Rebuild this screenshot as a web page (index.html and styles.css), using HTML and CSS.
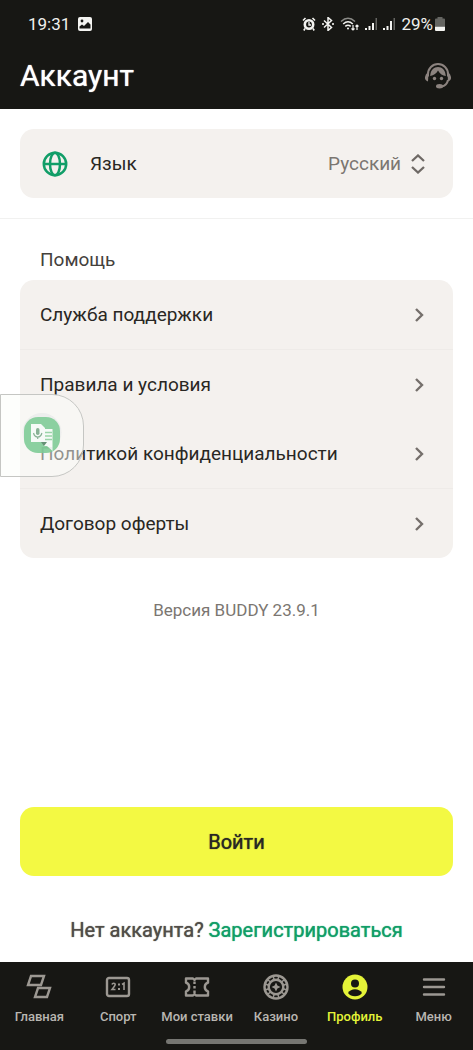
FILE: index.html
```html
<!DOCTYPE html>
<html lang="ru">
<head>
<meta charset="utf-8">
<meta name="viewport" content="width=device-width, initial-scale=1">
<title>Аккаунт</title>
<link rel="stylesheet" href="styles.css">
</head>
<body>
<div class="app">
  <header class="top">
    <div class="status">
      <div class="status-left">
        <span>19:31</span>
        <svg width="14" height="14" viewBox="0 0 14 14"><rect width="14" height="14" rx="2" fill="#f4f4f1"/><circle cx="4" cy="4" r="1.4" fill="#171714"/><path d="M1.5 11.5V9.5L4 7.5l2 1.5 4-4 2.5 2.500v4z" fill="#171714"/></svg>
      </div>
      <div class="status-right">
        <svg width="14" height="14" viewBox="0 0 14 14" fill="none" stroke="#f4f4f1"><circle cx="7" cy="7.500" r="4.200" stroke-width="2.600"/><path d="M7 5v3h2" stroke-width="1.300"/><path d="M1 3.500L3.500 1M10.500 1L13 3.500M3 11.500l-1.200 2M11 11.500l1.200 2" stroke-width="1.600"/></svg>
        <svg width="14" height="14" viewBox="0 0 14 14" fill="none" stroke="#f4f4f1" stroke-width="1.500"><path d="M3 3.500l7.500 7L7 13.500V.5l3.500 3-7.500 7"/><path d="M1.200 7h1.600M11.200 7h1.600" stroke-width="1.800"/></svg>
        <svg width="20" height="14" viewBox="0 0 20 14" fill="none" stroke="#f4f4f1" stroke-width="1.500"><path d="M1 4.500Q8-2 15 4.500" stroke="#8b8b87"/><path d="M3.200 7Q8 2.500 12.800 7M5.300 9.400Q8 7 10.700 9.400"/><circle cx="8" cy="11.500" r="1" fill="#f4f4f1" stroke="none"/><path d="M13 8v5M11.500 11.500L13 13l1.500-1.500M17 13V8M15.500 9.500L17 8l1.500 1.500" stroke-width="1.200"/></svg>
        <svg width="13" height="14" viewBox="0 0 13 14"><path d="M0 11h2v2H0zM3.500 9h2v4h-2zM7 6h2v7H7z" fill="#f4f4f1"/><path d="M10.500 1h1.500v12h-1.500z" fill="#656561"/></svg>
        <svg width="13" height="14" viewBox="0 0 13 14"><path d="M0 11h2v2H0zM3.500 9h2v4h-2zM7 4h2v9H7z" fill="#f4f4f1"/><path d="M10.500 1h1.500v12h-1.500z" fill="#656561"/></svg>
        <span class="battery">29%<svg width="10" height="14" viewBox="0 0 10 14"><path d="M2.500 0h5v1.500H9A1 1 0 0 1 10 2.500V9H0V2.500A1 1 0 0 1 1 1.500h1.500z" fill="#656561"/><path d="M0 9.500h10V13a1 1 0 0 1-1 1H1a1 1 0 0 1-1-1z" fill="#f4f4f1"/></svg></span>
      </div>
    </div>
    <div class="title-bar">
      <h1 class="title">Аккаунт</h1>
      <button class="support" type="button" aria-label="Поддержка">
        <svg width="28" height="28" viewBox="0 0 28 28" fill="none" stroke="#8c837f" stroke-width="2"><path d="M4 14.500V12a10 10 0 0 1 20 0v2.500"/><path d="M4.500 10.500H3.500Q1.500 12 1 15T4 19.500z" fill="#8c837f" stroke="none"/><path d="M23.500 10.500h1Q26.500 12 27 15T24 19.500z" fill="#8c837f" stroke="none"/><path d="M24 18q-1 5-6 6.500h-3"/><ellipse cx="15.500" cy="24.200" rx="3.500" ry="2.200" fill="#8c837f" stroke="none"/><path d="M6.200 14C6.500 8 10 5 14 5s7.500 3 7.800 9c-3-.5-6-2-7.800-5.500-1.500 3-4 4.800-7.800 5.500z" fill="#8c837f" stroke="none"/><circle cx="10.500" cy="16.500" r="1.700" fill="#8c837f" stroke="none"/><circle cx="17.500" cy="16.500" r="1.700" fill="#8c837f" stroke="none"/></svg>
      </button>
    </div>
  </header>

  <main class="content">
    <section class="language-section">
      <div class="language">
        <svg class="globe" width="26" height="26" viewBox="0 0 26 26" fill="none" stroke="#119e68" stroke-width="2.500"><circle cx="13" cy="13" r="11.200"/><ellipse cx="13" cy="13" rx="5" ry="11.200"/><path d="M2 13h22"/></svg>
        <label for="language">Язык</label>
        <select id="language" class="language-select"><option>Русский</option></select>
        <svg width="14" height="20" viewBox="0 0 14 20" fill="none" stroke="#6e6965" stroke-width="2.300"><path d="M1 7l6-5.500L13 7M1 13l6 5.500L13 13"/></svg>
      </div>
    </section>

    <section class="help">
      <h2 class="help-title">Помощь</h2>
      <nav class="links" aria-label="Помощь">
        <a class="link ruled" href="#support">Служба поддержки<svg width="10" height="14" viewBox="0 0 10 14"><path d="M2 1l6 6-6 6"/></svg></a>
        <a class="link" href="#terms">Правила и условия<svg width="10" height="14" viewBox="0 0 10 14"><path d="M2 1l6 6-6 6"/></svg></a>
        <a class="link ruled" href="#privacy">Политикой конфиденциальности<svg width="10" height="14" viewBox="0 0 10 14"><path d="M2 1l6 6-6 6"/></svg></a>
        <a class="link" href="#offer">Договор оферты<svg width="10" height="14" viewBox="0 0 10 14"><path d="M2 1l6 6-6 6"/></svg></a>
      </nav>
    </section>

    <p class="version">Версия BUDDY 23.9.1</p>

    <section class="auth">
      <button class="login" type="button">Войти</button>
      <p class="register">Нет аккаунта? <a href="#register">Зарегистрироваться</a></p>
    </section>
  </main>

  <footer class="bottom">
    <nav class="tabs" aria-label="Разделы">
      <a class="tab" href="#home"><svg width="26" height="26" viewBox="0 0 26 26"><path d="M5 2h13l-3 9H2zM12 14h12l-3 9H9z"/></svg>Главная</a>
      <a class="tab" href="#sport"><svg width="26" height="26" viewBox="0 0 26 26"><rect x="2" y="4" width="22" height="18" rx="2"/><path d="M7 10.500q.3-1.300 1.700-1.300 1.500 0 1.500 1.300 0 1-3.200 5h3.500M17 10.500l2-1.300V16" stroke-width="1.600"/><path d="M13 9.500h2v2h-2zM13 14h2v2h-2z" fill="#9c9892" stroke="none"/></svg>Спорт</a>
      <a class="tab" href="#bets"><svg width="26" height="26" viewBox="0 0 26 26"><path d="M2 4.500h7l1.500 1.500L12 4.500h12v4.200q-3.200 1-3.200 4.300t3.200 4.300v4.200H12L10.500 20 9 21.500H2v-4.200q3.200-1 3.200-4.300T2 8.700z" stroke-linejoin="round"/><path d="M10.500 7.500v2.500M10.500 12v2.500M10.500 16.500V19"/></svg>Мои ставки</a>
      <a class="tab" href="#casino"><svg width="26" height="26" viewBox="0 0 26 26"><circle cx="13" cy="13" r="11.500"/><circle cx="13" cy="13" r="7.300"/><path d="M10 2.500l1.500 3.500M16 2.500L14.500 6M10 23.500l1.500-3.500M16 23.500L14.500 20M2.500 10L6 11.500M2.500 16L6 14.500M23.500 10L20 11.500M23.500 16L20 14.500M4.500 5.500l3.500 3M21.500 5.500L18 8.500M4.500 20.500l3.500-3M21.500 20.500l-3.500-3" stroke-width="1.500"/><path d="M13 8.500l1.400 3.100 3.100 1.400-3.100 1.400L13 17.500l-1.400-3.100L8.500 13l3.100-1.400z" fill="#9c9892" stroke="none"/></svg>Казино</a>
      <a class="tab active" href="#profile" aria-current="page"><svg width="26" height="26" viewBox="0 0 26 26"><circle cx="13" cy="13" r="12.500" fill="#e4f338" stroke="none"/><circle cx="13" cy="9.500" r="4" fill="#171714" stroke="none"/><path d="M6 19q2.500-3.700 7-3.700t7 3.700q-2.500 3.200-7 3.200T6 19z" fill="#171714" stroke="none"/></svg>Профиль</a>
      <a class="tab" href="#menu"><svg width="26" height="26" viewBox="0 0 26 26"><path d="M3 5.500h20M3 13h20M3 20.500h20" stroke-linecap="round"/></svg>Меню</a>
    </nav>
    <div class="home-bar"></div>
  </footer>

  <button class="translate" type="button" aria-label="Перевести">
    <svg width="42" height="42" viewBox="0 0 42 42"><circle cx="21" cy="19.500" r="19.500" fill="#ebeceb"/><rect x="3" y="4" width="36" height="36" rx="14" fill="#7fcb96"/><path d="M23 16h8.500v22L26 33h-3z" fill="#f5faf6"/><path d="M10 11h10l4 4v14H10z" fill="#f5faf6"/><path d="M24 19.500h7M24 23h7M24 26.500h7" stroke="#8fcf9f" stroke-width="1.500"/><rect x="15" y="15" width="3.500" height="7" rx="1.700" fill="#7ba98a"/><path d="M12.500 20q1 4 4.200 4t4.200-4M16.700 24v2" stroke="#7ba98a" fill="none" stroke-width="1.200"/><path d="M20 29h6l-3 4z" fill="#568567"/></svg>
  </button>
</div>
</body>
</html>
```

FILE: styles.css
```css
* { box-sizing: border-box; }

body {
  margin: 0;
  background: #fff;
  color: #292723;
  font-family: Roboto, "Liberation Sans", sans-serif;
  font-size: 19px;
}

h1, h2, p { margin: 0; font-weight: 400; }
a { color: inherit; text-decoration: none; }
button, select { font: inherit; border: 0; padding: 0; background: none; }
svg { display: block; flex: none; }

.app {
  display: flex;
  flex-direction: column;
  min-height: 100vh;
}

.top { background: #171714; }

.status {
  display: flex;
  justify-content: space-between;
  align-items: center;
  height: 48px;
  padding: 0 28px;
  color: #f0f0ed;
  font-size: 17px;
}

.status-left { display: flex; align-items: center; gap: 8px; }
.status-right { display: flex; align-items: center; gap: 5px; }
.battery { display: flex; align-items: center; gap: 2px; }

.title-bar {
  display: flex;
  justify-content: space-between;
  align-items: center;
  height: 61px;
  padding: 0 21px 6px 20px;
}

.title {
  color: #fff;
  font-size: 30px;
  line-height: 36px;
  text-shadow: 0 0 1px currentColor;
}

.content {
  display: flex;
  flex: 1;
  flex-direction: column;
}

.language-section {
  padding: 20px;
  border-bottom: 1px solid #f1f1f0;
}

.language {
  display: flex;
  align-items: center;
  height: 69px;
  padding: 0 28px 0 22px;
  border-radius: 14px;
  background: #f4f1ee;
}

.language label { flex: 1; padding-left: 22px; }

.language-select {
  margin-right: 9px;
  appearance: none;
  color: #7b7671;
}

.help { padding: 29px 20px 0; }

.help-title {
  padding: 0 20px 8px;
  color: #45413c;
  font-size: 19px;
  line-height: 24px;
}

.links {
  overflow: hidden;
  border-radius: 14px;
  background: #f4f1ee;
}

.link {
  display: flex;
  justify-content: space-between;
  align-items: center;
  height: 69px;
  padding: 0 29px 0 20px;
}

.link.ruled { height: 70px; border-bottom: 1px solid #eeebe8; }

.link svg {
  fill: none;
  stroke: #75706c;
  stroke-width: 2.4;
}

.version {
  padding-top: 40px;
  color: #7b7671;
  font-size: 17px;
  line-height: 24px;
  text-align: center;
}

.auth {
  margin-top: auto;
  padding: 0 20px 20px;
  font-size: 20px;
  text-align: center;
}

.login {
  width: 100%;
  height: 69px;
  border-radius: 14px;
  background: #f3f943;
  color: #292723;
  text-shadow: 0 0 1px currentColor;
}

.register {
  padding-top: 42px;
  color: #514d48;
  line-height: 24px;
  text-shadow: 0 0 1px currentColor;
}

.register a { color: #119e68; text-shadow: 0 0 1px currentColor; }

.bottom {
  padding: 12px 0 6px;
  background: #171714;
}

.tabs {
  display: grid;
  grid-template-columns: repeat(6, 1fr);
}

.tab {
  display: flex;
  flex-direction: column;
  align-items: center;
  gap: 9px;
  color: #b9b6b1;
  font-size: 13px;
  font-weight: 500;
  line-height: 16px;
  white-space: nowrap;
}

.tab svg { fill: none; stroke: #9c9892; stroke-width: 2.4; }
.tab.active { color: #e4f338; }

.home-bar {
  width: 30%;
  height: 5px;
  margin: 14px auto 0;
  border-radius: 3px;
  background: #767672;
}

.translate {
  position: fixed;
  top: 394px;
  left: 0;
  display: flex;
  align-items: center;
  width: 84px;
  height: 83px;
  padding: 0 0 4px 20px;
  border: 1px solid #c5c6c3;
  border-radius: 0 32px 32px 0;
  background: rgba(252, 253, 250, 0.5);
}

.translate svg { opacity: 0.9; }
```
